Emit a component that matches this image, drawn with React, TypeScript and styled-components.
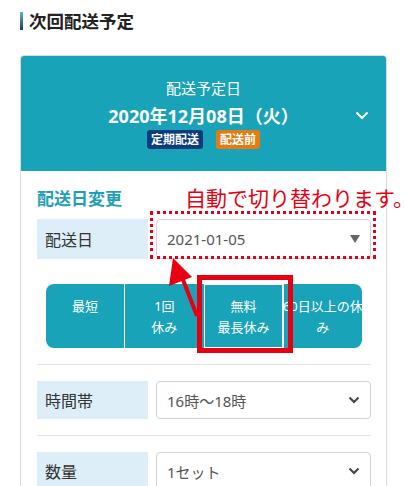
import React from "react";
import styled, { createGlobalStyle } from "styled-components";

const GlobalStyle = createGlobalStyle`
  body {
    margin: 0;
    background: #fff;
    font-family: "Noto Sans", "Noto Sans CJK JP", sans-serif;
    overflow: hidden;
  }
`;

const Page = styled.div`
  position: relative;
  width: 405px;
  height: 486px;
  padding: 11px 18px 0 20px;
  box-sizing: border-box;
  overflow: hidden;
`;

const Heading = styled.h2`
  display: flex;
  align-items: center;
  gap: 6px;
  margin: 0 0 24px;
  font-size: 17.5px;
  line-height: 20px;
  font-weight: 700;
  color: #222;
  &::before {
    content: "";
    width: 3px;
    height: 18px;
    background: linear-gradient(#5bb4d6, #1c3d5c);
  }
`;

const Card = styled.section`
  width: 367px;
  border: 1px solid #dcdcdc;
  border-radius: 4px;
  box-sizing: border-box;
`;

const CardHead = styled.div`
  position: relative;
  background: #19a3b8;
  border-radius: 3px 3px 0 0;
  padding: 21px 0 22px;
  display: flex;
  flex-direction: column;
  align-items: center;
  color: #fff;
`;

const HeadLabel = styled.div`
  font-size: 15px;
  line-height: 22px;
`;

const HeadDate = styled.div`
  margin-top: 5px;
  font-size: 18px;
  line-height: 24px;
  font-weight: 700;
`;

const Badges = styled.div`
  margin-top: 2px;
  display: flex;
  gap: 13px;
`;

const Badge = styled.span<{ $tone: "navy" | "orange" }>`
  background: ${({ $tone }) => ($tone === "navy" ? "#0b3d7e" : "#e57c12")};
  color: #fff;
  font-size: 12px;
  font-weight: 700;
  line-height: 19px;
  padding: 0 4px;
  border-radius: 3px;
`;

const Toggle = styled.svg`
  position: absolute;
  right: 17px;
  top: 55px;
`;

const CardBody = styled.div`
  padding: 16px 15px 0 16px;
`;

const SectionTitle = styled.h3`
  margin: 0 0 8px;
  font-size: 17px;
  line-height: 24px;
  font-weight: 700;
  color: #1ea0b6;
`;

const Row = styled.div<{ $h: number }>`
  display: flex;
  gap: 8px;
  height: ${({ $h }) => $h}px;
`;

const Label = styled.div`
  width: 111px;
  flex: none;
  background: #ddeef8;
  color: #333;
  font-size: 16px;
  display: flex;
  align-items: center;
  padding-left: 8px;
  box-sizing: border-box;
`;

const SelectBox = styled.div`
  flex: 1;
  border: 1px solid #cfd3d8;
  border-radius: 4px;
  display: flex;
  align-items: center;
  justify-content: space-between;
  padding: 0 10px 0 10px;
  font-size: 15px;
  color: #555;
  box-sizing: border-box;
`;

const Segments = styled.div`
  margin: 25px 9px 0 9px;
  height: 64px;
  display: flex;
  background: #19a3b8;
  border-radius: 8px;
`;

const Segment = styled.div<{ $active?: boolean; $first?: boolean }>`
  flex: 1;
  min-width: 0;
  display: flex;
  flex-direction: column;
  align-items: center;
  padding-top: 12px;
  box-sizing: border-box;
  color: #fff;
  font-size: 13px;
  line-height: 21px;
  white-space: nowrap;
  border-left: ${({ $first }) => ($first ? "none" : "1px solid #fff")};
  outline: ${({ $active }) => ($active ? "1px solid #fff" : "none")};
  outline-offset: -1px;
`;

const Divider = styled.hr`
  border: 0;
  border-top: 1px solid #dfe1e4;
  margin: 16px 0;
`;

const Note = styled.div`
  position: absolute;
  left: 185px;
  top: 186px;
  font-size: 21px;
  line-height: 24px;
  color: #e60012;
  white-space: nowrap;
`;

const DottedFrame = styled.div`
  position: absolute;
  left: 150px;
  top: 211px;
  width: 226px;
  height: 48px;
  border: 3px dotted #e60012;
  box-sizing: border-box;
`;

const RedBox = styled.div`
  position: absolute;
  left: 197px;
  top: 275px;
  width: 96px;
  height: 78px;
  border: 5px solid #e60012;
  box-sizing: border-box;
`;

const Arrow = styled.svg`
  position: absolute;
  left: 0;
  top: 0;
  pointer-events: none;
`;

const Chevron = () => (
  <svg width="12" height="8" viewBox="0 0 12 8">
    <path d="M1.5 1.5 L6 6 L10.5 1.5" fill="none" stroke="#444" strokeWidth="2" />
  </svg>
);

export default function App() {
  return (
    <>
      <GlobalStyle />
      <Page>
        <Heading>次回配送予定</Heading>
        <Card>
          <CardHead>
            <HeadLabel>配送予定日</HeadLabel>
            <HeadDate>2020年12月08日（火）</HeadDate>
            <Badges>
              <Badge $tone="navy">定期配送</Badge>
              <Badge $tone="orange">配送前</Badge>
            </Badges>
            <Toggle width="14" height="9" viewBox="0 0 14 9">
              <path d="M1.5 1.5 L7 7 L12.5 1.5" fill="none" stroke="#fff" strokeWidth="2" />
            </Toggle>
          </CardHead>
          <CardBody>
            <SectionTitle>配送日変更</SectionTitle>
            <Row $h={40}>
              <Label>配送日</Label>
              <SelectBox>
                2021-01-05
                <svg width="10" height="8" viewBox="0 0 10 8">
                  <path d="M0 0 H10 L5 8 Z" fill="#666" />
                </svg>
              </SelectBox>
            </Row>
            <Segments>
              <Segment $first>最短</Segment>
              <Segment>
                <span>1回</span>
                <span>休み</span>
              </Segment>
              <Segment $active>
                <span>無料</span>
                <span>最長休み</span>
              </Segment>
              <Segment>
                <span>60日以上の休</span>
                <span>み</span>
              </Segment>
            </Segments>
            <Divider />
            <Row $h={38}>
              <Label>時間帯</Label>
              <SelectBox>
                16時〜18時
                <Chevron />
              </SelectBox>
            </Row>
            <Divider />
            <Row $h={38}>
              <Label>数量</Label>
              <SelectBox>
                1セット
                <Chevron />
              </SelectBox>
            </Row>
          </CardBody>
        </Card>
        <Note>自動で切り替わります。</Note>
        <DottedFrame />
        <RedBox />
        <Arrow width="405" height="486" viewBox="0 0 405 486">
          <path d="M197 316 L180 272" stroke="#e60012" strokeWidth="4" fill="none" />
          <path d="M173 258 L169 286 L192 277 Z" fill="#e60012" />
        </Arrow>
      </Page>
    </>
  );
}
